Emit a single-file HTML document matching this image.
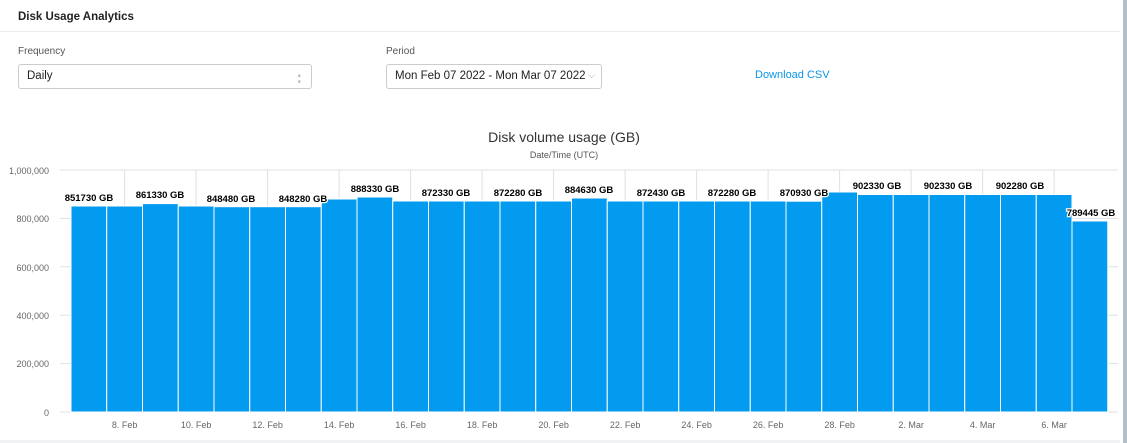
<!DOCTYPE html>
<html><head><meta charset="utf-8"><style>
body{margin:0;width:1127px;height:443px;background:#fff;font-family:"Liberation Sans",sans-serif;position:relative;overflow:hidden}
.t{position:absolute;left:18px;top:11px;font-size:11.5px;font-weight:bold;color:#222}
.hr{position:absolute;left:0;top:31px;width:1120px;height:1px;background:#ececec}
.lbl{position:absolute;font-size:10px;color:#555}
.sel{position:absolute;top:64px;height:25px;border:1px solid #c8cdd2;border-radius:3px;box-sizing:border-box;font-size:11.5px;color:#222;line-height:23px;padding-left:8px}
.dl{position:absolute;left:755px;top:69px;font-size:11px;color:#0a96e6}
.sb{position:absolute;left:1123px;top:0;width:4px;height:443px;background:#b3bfc6}
.fr{position:absolute;left:0;top:440px;width:1120px;height:3px;background:#f1f2f3}
</style></head><body>
<div class="t">Disk Usage Analytics</div>
<div class="hr"></div>
<div class="lbl" style="left:18px;top:46px">Frequency</div>
<div class="lbl" style="left:386px;top:46px">Period</div>
<div class="sel" style="left:18px;width:294px">Daily<span style="position:absolute;right:10px;top:0;color:#bbb;font-size:7px;line-height:7px;top:7px">▴<br>▾</span></div>
<div class="sel" style="left:386px;width:216px">Mon Feb 07 2022 - Mon Mar 07 2022<span style="position:absolute;right:6px;top:-1px;color:#aaa;font-size:9px">⌵</span></div>
<div class="dl">Download CSV</div>
<svg width="1127" height="443" style="position:absolute;left:0;top:0" font-family="Liberation Sans, sans-serif">
<text x="564" y="142" text-anchor="middle" font-size="14" fill="#333">Disk volume usage (GB)</text>
<text x="564" y="158" text-anchor="middle" font-size="9" fill="#555">Date/Time (UTC)</text>
<g stroke="#dde1e5" stroke-width="1">
<line x1="60" y1="170" x2="1118" y2="170"/><line x1="60" y1="218.4" x2="1118" y2="218.4"/><line x1="60" y1="266.8" x2="1118" y2="266.8"/><line x1="60" y1="315.2" x2="1118" y2="315.2"/><line x1="60" y1="363.6" x2="1118" y2="363.6"/><line x1="60" y1="412" x2="1118" y2="412"/>
<line x1="124.6" y1="170" x2="124.6" y2="412"/><line x1="196.1" y1="170" x2="196.1" y2="412"/><line x1="267.6" y1="170" x2="267.6" y2="412"/><line x1="339.1" y1="170" x2="339.1" y2="412"/><line x1="410.6" y1="170" x2="410.6" y2="412"/><line x1="482.1" y1="170" x2="482.1" y2="412"/><line x1="553.6" y1="170" x2="553.6" y2="412"/><line x1="625.1" y1="170" x2="625.1" y2="412"/><line x1="696.6" y1="170" x2="696.6" y2="412"/><line x1="768.1" y1="170" x2="768.1" y2="412"/><line x1="839.6" y1="170" x2="839.6" y2="412"/><line x1="911.1" y1="170" x2="911.1" y2="412"/><line x1="982.6" y1="170" x2="982.6" y2="412"/><line x1="1054.1" y1="170" x2="1054.1" y2="412"/>
</g>
<g font-size="9" fill="#666" text-anchor="end">
<text x="49" y="174">1,000,000</text><text x="49" y="222">800,000</text><text x="49" y="271">600,000</text><text x="49" y="319">400,000</text><text x="49" y="367">200,000</text><text x="49" y="416">0</text>
</g>
<g fill="#039bf0" stroke="#fff" stroke-width="1">
<rect x="71" y="206" width="35.75" height="206"/><rect x="106.75" y="206" width="35.75" height="206"/><rect x="142.5" y="203.6" width="35.75" height="208.4"/><rect x="178.25" y="206" width="35.75" height="206"/><rect x="214" y="206.7" width="35.75" height="205.3"/><rect x="249.75" y="206.7" width="35.75" height="205.3"/><rect x="285.5" y="206.7" width="35.75" height="205.3"/><rect x="321.25" y="199" width="35.75" height="213"/><rect x="357" y="197" width="35.75" height="215"/><rect x="392.75" y="201" width="35.75" height="211"/><rect x="428.5" y="201" width="35.75" height="211"/><rect x="464.25" y="201" width="35.75" height="211"/><rect x="500" y="201" width="35.75" height="211"/><rect x="535.75" y="201" width="35.75" height="211"/><rect x="571.5" y="198" width="35.75" height="214"/><rect x="607.25" y="201" width="35.75" height="211"/><rect x="643" y="201" width="35.75" height="211"/><rect x="678.75" y="201" width="35.75" height="211"/><rect x="714.5" y="201" width="35.75" height="211"/><rect x="750.25" y="201" width="35.75" height="211"/><rect x="786" y="201.2" width="35.75" height="210.8"/><rect x="821.75" y="192" width="35.75" height="220"/><rect x="857.5" y="194.5" width="35.75" height="217.5"/><rect x="893.25" y="194.5" width="35.75" height="217.5"/><rect x="929" y="194.5" width="35.75" height="217.5"/><rect x="964.75" y="194.5" width="35.75" height="217.5"/><rect x="1000.5" y="194.5" width="35.75" height="217.5"/><rect x="1036.25" y="194.5" width="35.75" height="217.5"/><rect x="1072" y="221" width="35.75" height="191"/>
</g>
<g font-size="9.5" font-weight="bold" fill="#000" text-anchor="middle" stroke="#fff" stroke-width="2.5" paint-order="stroke">
<text x="89" y="201">851730 GB</text><text x="160" y="198">861330 GB</text><text x="231" y="202">848480 GB</text><text x="303" y="202">848280 GB</text><text x="375" y="192">888330 GB</text><text x="446" y="196">872330 GB</text><text x="518" y="196">872280 GB</text><text x="589" y="193">884630 GB</text><text x="661" y="196">872430 GB</text><text x="732" y="196">872280 GB</text><text x="804" y="196">870930 GB</text><text x="877" y="189">902330 GB</text><text x="948" y="189">902330 GB</text><text x="1020" y="189">902280 GB</text><text x="1091" y="216">789445 GB</text>
</g>
<g font-size="9" fill="#666" text-anchor="middle">
<text x="124.6" y="428">8. Feb</text><text x="196.1" y="428">10. Feb</text><text x="267.6" y="428">12. Feb</text><text x="339.1" y="428">14. Feb</text><text x="410.6" y="428">16. Feb</text><text x="482.1" y="428">18. Feb</text><text x="553.6" y="428">20. Feb</text><text x="625.1" y="428">22. Feb</text><text x="696.6" y="428">24. Feb</text><text x="768.1" y="428">26. Feb</text><text x="839.6" y="428">28. Feb</text><text x="911.1" y="428">2. Mar</text><text x="982.6" y="428">4. Mar</text><text x="1054.1" y="428">6. Mar</text>
</g>
</svg>
<div class="fr"></div>
<div class="sb"></div>
</body></html>
